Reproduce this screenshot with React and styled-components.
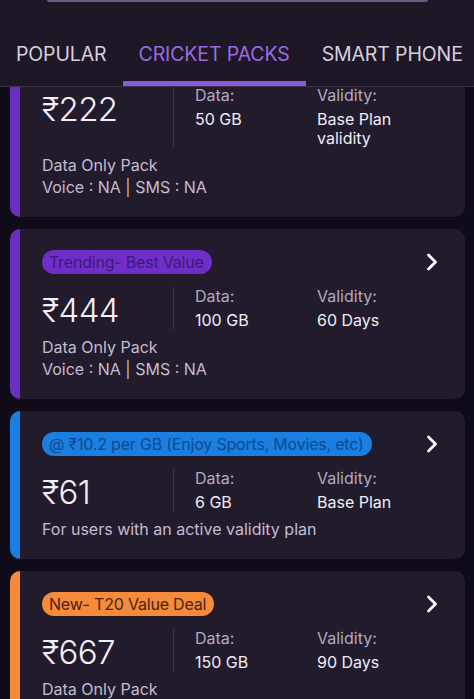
import React, { useLayoutEffect, useRef } from "react";
import styled, { createGlobalStyle } from "styled-components";

const Global = createGlobalStyle`
  html, body { margin: 0; padding: 0; background: #100b19; }
  body { font-family: Inter, "Noto Sans", "Liberation Sans", sans-serif; -webkit-font-smoothing: antialiased; }
  * { box-sizing: border-box; }
`;

const Screen = styled.div`
  width: 474px;
  height: 699px;
  display: flex;
  flex-direction: column;
  overflow: hidden;
  background: #100b19;
`;

const Header = styled.header`
  flex: none;
  background: #1e1726;
  border-bottom: 1px solid #3c3247;
  display: flex;
  flex-direction: column;
`;

const TopBar = styled.div`
  height: 2px;
  margin: 0 46px 0 47px;
  background: #6a5a82;
  border-radius: 0 0 2px 2px;
`;

const TabRow = styled.nav`
  display: flex;
  margin-top: 40px;
  white-space: nowrap;
  overflow: hidden;
`;

const Tab = styled.div`
  flex: none;
  padding: 0 16px 15px;
  font-size: 19.5px;
  line-height: 24px;
  letter-spacing: -0.12px;
  color: ${(p) => (p.$active ? "#9a6be0" : "#d6d0dc")};
  border-bottom: 5px solid ${(p) => (p.$active ? "#8a58d8" : "transparent")};
`;

const List = styled.div`
  flex: 1;
  overflow-y: auto;
  scrollbar-width: none;
  &::-webkit-scrollbar { display: none; }
`;

const ListInner = styled.div`
  display: flex;
  flex-direction: column;
  gap: 12px;
  padding: 10px 9px 20px 10px;
`;

const Card = styled.div`
  background: #221b2c;
  border-left: 10px solid ${(p) => p.$accent};
  border-radius: 10px;
  padding: 21px 24px 19px 22px;
  display: flex;
  flex-direction: column;
`;

const TopLine = styled.div`
  display: flex;
  align-items: center;
  justify-content: space-between;
  height: 24px;
`;

const Badge = styled.span`
  display: inline-block;
  height: 24px;
  line-height: 24px;
  padding: 0 8px 0 7px;
  border-radius: 12px;
  font-size: 16px;
  letter-spacing: -0.2px;
  background: ${(p) => p.$bg};
  color: ${(p) => p.$fg};
  white-space: nowrap;
`;

const Chevron = styled.svg`
  flex: none;
  margin-right: 2px;
`;

const InfoRow = styled.div`
  display: flex;
  align-items: stretch;
  margin-top: 13px;
`;

const Price = styled.div`
  flex: none;
  width: 131px;
  padding-top: 3px;
  font-size: 33px;
  line-height: 40px;
  font-weight: 300;
  letter-spacing: -0.6px;
  color: #f3eff7;
`;

const Divider = styled.div`
  flex: none;
  width: 1px;
  background: #3a3145;
`;

const Col = styled.div`
  flex: ${(p) => (p.$grow ? 1 : "none")};
  width: ${(p) => (p.$grow ? "auto" : "143px")};
  padding-left: ${(p) => (p.$first ? "21px" : "0")};
  display: flex;
  flex-direction: column;
`;

const Label = styled.div`
  font-size: 16px;
  line-height: 18px;
  color: #b3a9bf;
`;

const Value = styled.div`
  margin-top: 6px;
  font-size: 16px;
  line-height: 19px;
  font-weight: 400;
  color: #f0ecf4;
`;

const Desc = styled.div`
  margin-top: 6px;
  font-size: 16px;
  line-height: 22px;
  color: #c4bcce;
`;

const plans = [
  {
    accent: "#6a2fc0",
    badge: { text: "Trending- Best Value", bg: "#6f2ec7", fg: "#3f1a78" },
    price: "₹222",
    data: "50 GB",
    validity: "Base Plan validity",
    desc: ["Data Only Pack", "Voice : NA | SMS : NA"],
  },
  {
    accent: "#6a2fc0",
    badge: { text: "Trending- Best Value", bg: "#6f2ec7", fg: "#3f1a78" },
    price: "₹444",
    data: "100 GB",
    validity: "60 Days",
    desc: ["Data Only Pack", "Voice : NA | SMS : NA"],
  },
  {
    accent: "#1a7fe0",
    badge: { text: "@ ₹10.2 per GB (Enjoy Sports, Movies, etc)", bg: "#1b7fe2", fg: "#0c4a92" },
    price: "₹61",
    data: "6 GB",
    validity: "Base Plan",
    desc: ["For users with an active validity plan"],
  },
  {
    accent: "#f4893a",
    badge: { text: "New- T20 Value Deal", bg: "#f58b3a", fg: "#4a2210" },
    price: "₹667",
    data: "150 GB",
    validity: "90 Days",
    desc: ["Data Only Pack", "Voice : NA | SMS : NA"],
  },
];

function PlanCard({ plan }) {
  return (
    <Card $accent={plan.accent}>
      <TopLine>
        <Badge $bg={plan.badge.bg} $fg={plan.badge.fg}>{plan.badge.text}</Badge>
        <Chevron width="14" height="20" viewBox="0 0 14 20">
          <path d="M3.5 3 L10.5 10 L3.5 17" fill="none" stroke="#ffffff" strokeWidth="2.8" strokeLinecap="round" strokeLinejoin="round" />
        </Chevron>
      </TopLine>
      <InfoRow>
        <Price>{plan.price}</Price>
        <Divider />
        <Col $first>
          <Label>Data:</Label>
          <Value>{plan.data}</Value>
        </Col>
        <Col $grow>
          <Label>Validity:</Label>
          <Value>{plan.validity}</Value>
        </Col>
      </InfoRow>
      <Desc>
        {plan.desc.map((d) => (
          <div key={d}>{d}</div>
        ))}
      </Desc>
    </Card>
  );
}

export default function App() {
  const listRef = useRef(null);
  useLayoutEffect(() => {
    if (listRef.current) listRef.current.scrollTop = 69;
  }, []);
  return (
    <Screen>
      <Global />
      <Header>
        <TopBar />
        <TabRow>
          <Tab>POPULAR</Tab>
          <Tab $active>CRICKET PACKS</Tab>
          <Tab>SMART PHONE</Tab>
        </TabRow>
      </Header>
      <List ref={listRef}>
        <ListInner>
          {plans.map((p, i) => (
            <PlanCard key={i} plan={p} />
          ))}
        </ListInner>
      </List>
    </Screen>
  );
}
